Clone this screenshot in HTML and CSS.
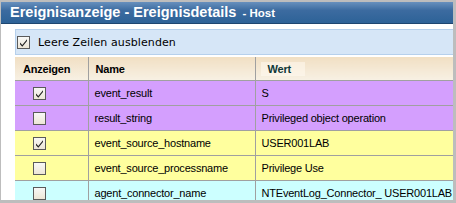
FILE: index.html
```html
<!DOCTYPE html>
<html>
<head>
<meta charset="utf-8">
<link rel="stylesheet" href="styles.css">
</head>
<body>
<div class="window">
  <div class="titlebar"><span class="title">Ereignisanzeige - Ereignisdetails</span><span class="sub">- Host</span></div>
  <div class="content">
    <div class="panel">
      <span class="cb checked"><svg viewBox="0 0 13 13" width="13" height="13"><path d="M3 6.5 L5.3 9 L10 3.2 L10 5 L5.3 10.8 L3 8.3 Z" fill="#222"/></svg></span>
      <span class="label">Leere Zeilen ausblenden</span>
    </div>
    <table class="grid">
      <colgroup><col class="c1"><col class="c2"><col class="c3"></colgroup>
      <thead>
        <tr><th class="h1">Anzeigen</th><th class="h2">Name</th><th class="h3"><span class="wert">Wert</span></th></tr>
      </thead>
      <tbody>
        <tr class="purple"><td class="cbcell"><span class="cb checked"><svg viewBox="0 0 13 13" width="13" height="13"><path d="M3 6.5 L5.3 9 L10 3.2 L10 5 L5.3 10.8 L3 8.3 Z" fill="#222"/></svg></span></td><td>event_result</td><td>S</td></tr>
        <tr class="purple"><td class="cbcell"><span class="cb"></span></td><td>result_string</td><td>Privileged object operation</td></tr>
        <tr class="yellow"><td class="cbcell"><span class="cb checked"><svg viewBox="0 0 13 13" width="13" height="13"><path d="M3 6.5 L5.3 9 L10 3.2 L10 5 L5.3 10.8 L3 8.3 Z" fill="#222"/></svg></span></td><td>event_source_hostname</td><td>USER001LAB</td></tr>
        <tr class="yellow"><td class="cbcell"><span class="cb"></span></td><td>event_source_processname</td><td>Privilege Use</td></tr>
        <tr class="cyan"><td class="cbcell"><span class="cb"></span></td><td>agent_connector_name</td><td>NTEventLog_Connector_ USER001LAB</td></tr>
      </tbody>
    </table>
  </div>
</div>
</body>
</html>
```
FILE: styles.css
```css
html, body {
  margin: 0;
  padding: 0;
  background: #bdbdbd;
  width: 456px;
  height: 203px;
  overflow: hidden;
}
.window {
  margin: 2px 0 0 1px;
  width: 452px;
  height: 198px;
  background: #fff;
  overflow: hidden;
}
.titlebar {
  height: 21px;
  border-bottom: 1px solid #1e4670;
  background: linear-gradient(#6790bd 0%, #3c6ba0 40%, #2d6297 100%);
  color: #fff;
  font-family: "Liberation Sans", Arial, sans-serif;
  font-weight: bold;
  display: flex;
  align-items: baseline;
  padding-left: 9px;
  line-height: 21px;
  white-space: nowrap;
}
.title {
  font-size: 14.5px;
}
.sub {
  font-size: 11.5px;
  margin-left: 6px;
}
.content {
  padding: 5px 0 0 14px;
}
.panel {
  height: 24px;
  background: #d6e6f7;
  border-top: 1px solid #b6d0ec;
  border-bottom: 1px solid #b6d0ec;
  border-left: 1px solid #b6d0ec;
  display: flex;
  align-items: center;
  padding-left: 1px;
}
.label {
  font-family: "DejaVu Sans", Verdana, sans-serif;
  font-size: 11px;
  margin-left: 8px;
  color: #000;
  letter-spacing: 0.1px;
}
.cb {
  display: inline-block;
  width: 11px;
  height: 11px;
  border: 1px solid #5a5a5a;
  background: linear-gradient(#f8f8f6, #ede6d6);
  position: relative;
}
.cb svg {
  position: absolute;
  left: -1px;
  top: -1px;
}
.grid {
  margin-top: 2px;
  border-collapse: collapse;
  width: 439px;
  table-layout: fixed;
  font-family: "Liberation Sans", Arial, sans-serif;
  font-size: 11px;
  letter-spacing: -0.2px;
}
.c1 { width: 73px; }
.c2 { width: 167px; }
.c3 { width: 199px; }
.grid th {
  height: 23px;
  padding: 0;
  background: linear-gradient(#f1dfc3, #f7f0e3);
  border-right: 1px solid #a0a0a0;
  border-bottom: 1px solid #a0a0a0;
  font-weight: bold;
  font-size: 11px;
  text-align: left;
  color: #000;
}
.grid th:last-child { border-right: none; }
.h1 { padding-left: 8px !important; }
.h2 { padding-left: 7px !important; }
.h3 { padding-left: 5px !important; }
.wert {
  display: inline-block;
  padding: 1px 14px 1px 7px;
  background: rgba(255, 250, 240, 0.55);
  color: #103838;
}
.grid td {
  height: 24px;
  padding: 0 0 0 6px;
  border-right: 1px solid #a0a0a0;
  border-bottom: 1px solid #a0a0a0;
  white-space: nowrap;
  overflow: hidden;
  color: #000;
}
.grid td:last-child { border-right: none; }
.grid td.cbcell { padding-left: 18px; }
.grid td.cbcell .cb { vertical-align: middle; }
.purple td { background: #d49ffe; }
.yellow td { background: #ffff9e; }
.cyan td { background: #ccffff; }
```
